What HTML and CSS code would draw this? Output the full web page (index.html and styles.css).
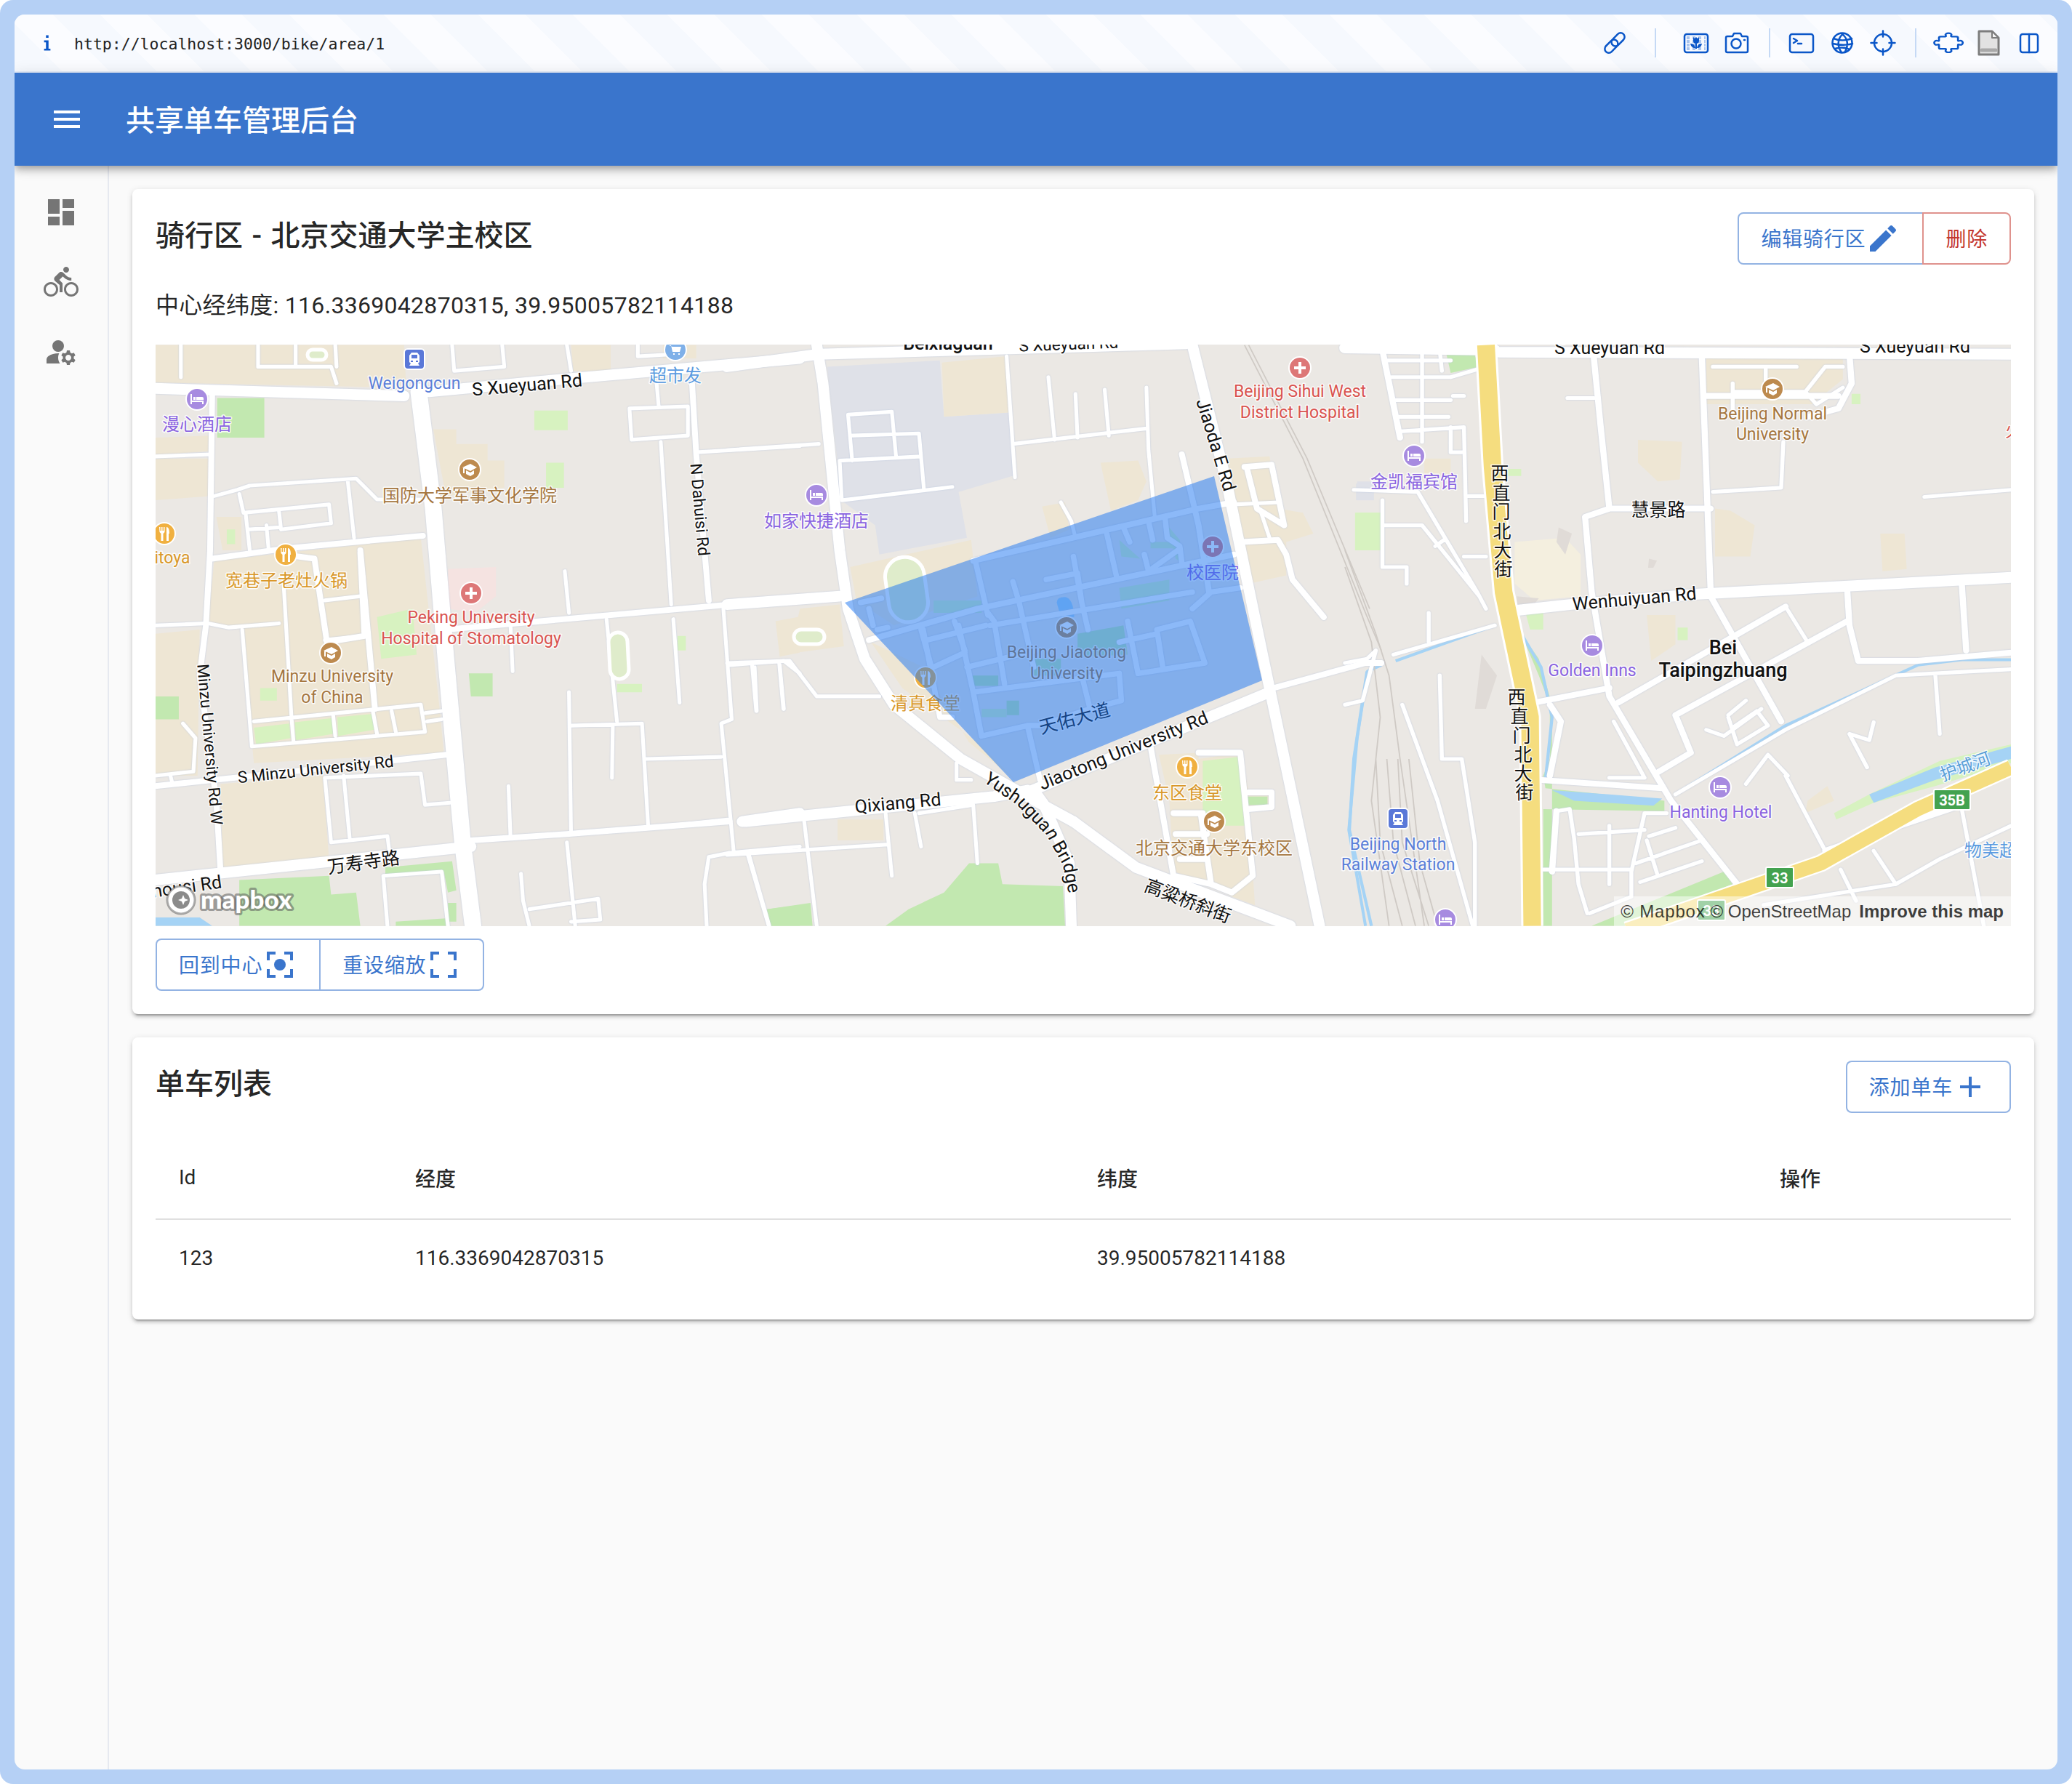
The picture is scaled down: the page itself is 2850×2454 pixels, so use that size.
FILE: index.html
```html
<!DOCTYPE html>
<html lang="zh">

<head>
    <meta charset="UTF-8">
    <title>共享单车管理后台</title>
    <link rel="stylesheet" href="styles.css">
</head>

<body>
    <div class="frame">
        <div class="window">
            <div class="browser-bar">
                <svg class="info-icon" viewBox="0 0 16 28"><path d="M6 2h4v4H6zM3 10h7v13h3v3H3v-3h3V13H3z"/></svg>
                <span class="url">http://localhost:3000/bike/area/1</span>
                <div class="tools">
                    <svg class="tool" viewBox="0 0 36 36"><g transform="rotate(-45 18 18)"><rect x="1" y="12.500" width="21" height="11" rx="5.500"/><rect x="14" y="12.500" width="21" height="11" rx="5.500"/></g></svg>
                    <span class="sep sep-wide"></span>
                    <svg class="tool" viewBox="0 0 36 36"><path class="tool-dots" d="M5 11h26M5 16h26M5 21h26M5 26h26"/><rect x="2" y="6" width="32" height="25" rx="3"/><path class="tool-fill" d="M14 10l2 2 2-2 2 2 2-2v5a4 4 0 0 1-8 0zM17 18h2v8h-2zM10 19c4 0 6 2 7 6-4 0-6-2-7-6zM26 19c-4 0-6 2-7 6 4 0 6-2 7-6z"/></svg>
                    <svg class="tool" viewBox="0 0 36 36"><path d="M5 9h7l2-4h9l2 4h6a2 2 0 0 1 2 2v18a2 2 0 0 1-2 2H5a2 2 0 0 1-2-2V11a2 2 0 0 1 2-2z"/><circle cx="17" cy="19" r="6.500"/><path d="M28 14h1"/></svg>
                    <span class="sep"></span>
                    <svg class="tool" viewBox="0 0 36 36"><rect x="2" y="6" width="32" height="25" rx="3"/><path d="M7 12l5 3-5 3M13 19h5"/></svg>
                    <svg class="tool" viewBox="0 0 36 36"><circle cx="18" cy="18" r="13.500"/><path d="M20 5c-8 5-10 17-3 26M16 5c8 4 12 14 6 25M6 12c7 3 17 3 25 0M5 19c8 2 17 3 27 0M8 26c7-2 14-2 20 1"/></svg>
                    <svg class="tool" viewBox="0 0 36 36"><circle cx="18" cy="18" r="12"/><path d="M18 1.500v8M18 26.500v8M1.500 18h8M26.500 18h8"/></svg>
                    <span class="sep"></span>
                    <svg class="tool" viewBox="0 0 36 36"><path transform="translate(-.5 1.500) scale(1.090 .880)" d="M8 9h6c1 0 1-1 .5-2-1-2 1-3.500 3.500-3.500s4.500 1.500 3.500 3.500c-.5 1-.5 2 .5 2h6a2 2 0 0 1 2 2v4c0 1 1 1 2 .5 2-1 4 .5 4 3s-2 4-4 3c-1-.5-2-.5-2 .5v4a2 2 0 0 1-2 2h-6c-1 0-1 1-.5 2 1 2-1 3.500-3.500 3.500s-4.500-1.500-3.500-3.500c.5-1 .5-2-.5-2H8a2 2 0 0 1-2-2v-4c0-1-1-1-2-.5-2 1-4-.5-4-3s2-4 4-3c1 .5 2 .5 2-.5v-4a2 2 0 0 1 2-2z"/></svg>
                    <svg class="tool tool-file" viewBox="0 0 36 36"><path d="M5 2h18l9 9v23H5z"/><path class="file-fold" d="M23 2v9h9z"/><path class="file-bar" d="M9 28h19"/></svg>
                    <svg class="tool" viewBox="0 0 36 36"><rect x="6" y="6" width="24" height="25" rx="3"/><path d="M18 6v25"/></svg>
                </div>
            </div>

            <header class="app-bar">
                <svg class="mui-icon" viewBox="0 0 24 24"><path d="M3 18h18v-2H3v2zm0-5h18v-2H3v2zm0-7v2h18V6H3z"/></svg>
                <h1 class="app-title">共享单车管理后台</h1>
            </header>

            <div class="app-body">
                <nav class="sidebar">
                    <svg class="mui-icon" viewBox="0 0 24 24"><path d="M3 13h8V3H3v10zm0 8h8v-6H3v6zm10 0h8V11h-8v10zm0-18v6h8V3h-8z"/></svg>
                    <svg class="mui-icon" viewBox="0 0 24 24"><path d="M15.5 5.5c1.1 0 2-.9 2-2s-.9-2-2-2-2 .9-2 2 .9 2 2 2zM5 12c-2.8 0-5 2.2-5 5s2.2 5 5 5 5-2.2 5-5-2.2-5-5-5zm0 8.5c-1.9 0-3.5-1.6-3.5-3.5s1.6-3.5 3.5-3.5 3.5 1.6 3.5 3.5-1.6 3.5-3.5 3.5zm5.8-10l2.4-2.4.8.8c1.3 1.3 3 2.1 5.1 2.1V9c-1.5 0-2.7-.6-3.6-1.5l-1.9-1.9c-.5-.4-1-.6-1.6-.6s-1.1.2-1.4.6L7.8 8.4c-.4.4-.6.9-.6 1.4 0 .6.2 1.1.6 1.4L11 14v5h2v-6.2l-2.2-2.3zM19 12c-2.8 0-5 2.2-5 5s2.2 5 5 5 5-2.2 5-5-2.2-5-5-5zm0 8.5c-1.9 0-3.5-1.6-3.5-3.5s1.6-3.5 3.5-3.5 3.5 1.6 3.5 3.5-1.6 3.5-3.5 3.5z"/></svg>
                    <svg class="mui-icon" viewBox="0 0 24 24"><circle cx="10" cy="8" r="4"/><path d="M10.67 13.02c-.22-.01-.44-.02-.67-.02-2.42 0-4.68.67-6.61 1.82-.88.52-1.39 1.5-1.39 2.53V20h9.26c-.79-1.13-1.26-2.51-1.26-4 0-1.07.25-2.07.67-2.98zM20.75 16c0-.22-.03-.42-.06-.63l1.14-1.01-1-1.73-1.45.49c-.32-.27-.68-.48-1.08-.63L18 11h-2l-.3 1.49c-.4.15-.76.36-1.08.63l-1.45-.49-1 1.73 1.14 1.01c-.03.21-.06.41-.06.63s.03.42.06.63l-1.14 1.01 1 1.73 1.45-.49c.32.27.68.48 1.08.63L16 21h2l.3-1.49c.4-.15.76-.36 1.08-.63l1.45.49 1-1.73-1.14-1.01c.03-.21.06-.41.06-.63zM17 18c-1.1 0-2-.9-2-2s.9-2 2-2 2 .9 2 2-.9 2-2 2z"/></svg>
                </nav>

                <main class="content">
                    <section class="card">
                        <div class="card-head">
                            <h2 class="card-title">骑行区 - 北京交通大学主校区</h2>
                            <div class="btn-group">
                                <button class="btn">编辑骑行区<svg class="mui-icon" viewBox="0 0 24 24"><path d="M3 17.25V21h3.75L17.81 9.94l-3.75-3.75L3 17.25zM20.71 7.04c.39-.39.39-1.02 0-1.41l-2.34-2.34c-.39-.39-1.02-.39-1.41 0l-1.83 1.83 3.75 3.75 1.83-1.83z"/></svg></button>
                                <button class="btn btn-danger">删除</button>
                            </div>
                        </div>
                        <p class="center-info">中心经纬度: 116.3369042870315, 39.95005782114188</p>

                        <div class="map">
                            <svg class="map-svg" viewBox="214 474 2552 800">
                                <defs>
                                    <g id="i-hotel"><circle class="pin pin-hotel" r="15"/><path class="glyph" d="M-9 7V-7h2V2h16v5H7V4H-7v3zM-5-3h3v4h-3zM-1-3h8a2 2 0 0 1 2 2v2H-1z"/></g>
                                    <g id="i-edu"><circle class="pin pin-edu" r="15"/><path class="glyph" d="M-10-3 1-8 10-3 1 2zM-5 1l6 3 5-3v5l-5 3-6-3zM-9-2h2v7h-2z"/></g>
                                    <g id="i-food"><circle class="pin pin-food" r="15"/><path class="glyph" d="M-7-9h1.500v5H-4v-5h1.500v5H-1v-5H.5v7l-2 2V10h-3V0l-2-2zM3-9c3 0 4 4 4 9H6v10H3z"/></g>
                                    <g id="i-hosp"><circle class="pin pin-hosp" r="15"/><path class="glyph" d="M-2-8h4v6h6v4H2v6h-4V2h-6v-4h6z"/></g>
                                    <g id="i-metro"><rect class="pin pin-metro" x="-14" y="-14" width="28" height="28" rx="5"/><path class="glyph" d="M-4-9h8l3 4v9l-2 2 2 3H-7l2-3-2-2V-5zM-4-6v5h8v-5zM-5 2v2h3V2zM2 2v2h3V2z"/></g>
                                    <g id="i-market"><circle class="pin pin-market" r="15"/><path class="glyph" d="M-9-6h3l2 9H6l2-7H-4M-3 5h2v2h-2zM4 5h2v2H4z"/></g>
                                </defs>

                                <rect class="map-bg" x="214" y="474" width="2552" height="800"/>

                                <!-- land use, drawn from left to right -->
                                <g transform="translate(200 470) scale(.574)">
                                    <path class="tan" d="M24 8H620L625 110 24 98zM24 230 155 225V262L24 272zM24 280H155V370L24 380zM165 525 660 470 705 880 715 985 260 1010 230 690 150 670zM180 1060 425 1040 440 1240 185 1265zM24 700 130 690 125 1040 24 1040zM690 210H745V245H820V285H860V350L720 370zM170 420H230V500H185zM1020 8H1115V70H1025zM1510 670 1568 660V745L1520 755zM1240 8H1320V40H1240z"/>
                                    <path class="pink" d="M725 545 840 540V610L790 650 725 640z"/>
                                    <path class="green" d="M172 135H285V230H172zM775 795H832V850H780zM24 850H80V905H24zM225 1290 440 1280 445 1325 505 1320 515 1400H225zM1490 1360 1568 1350V1400H1500zM575 1260 735 1245 745 1315 725 1320 715 1270 575 1280zM725 1345H745V1390H725zM600 1390 720 1382 722 1400H600z"/>
                                    <path class="green-light" d="M932 165H1012V212H932zM960 290H1003V350H960zM555 660 640 640 650 750 565 760zM260 925 345 915 348 950 265 965zM358 912 448 902 450 940 360 955zM460 900 545 892 548 930 462 945zM1130 820H1190V840H1130zM275 830H315V860H275zM195 450H215V485H195zM1275 705H1295V740H1275z"/>
                                    <path class="water" d="M24 1380H130L160 1400H24z"/>
                                </g>
                                <g transform="translate(1000 470) scale(.574)">
                                    <path class="slate" d="M240 60 510 45 520 180 675 170 690 320 555 360 575 470 365 510 355 440 280 385 265 290z"/>
                                    <path class="slate" d="M1510 335H1550V380H1510z"/>
                                    <path class="tan" d="M515 50 670 35 675 170 520 180zM295 540 585 475 600 610 480 650 400 680 310 620zM345 720 470 780 580 960 690 1050 600 960 420 830zM120 670 170 660 175 640 270 630 280 730 130 750zM895 290 985 285 1005 335 985 380 920 405zM755 395 810 385 820 450 775 470zM1200 280 1300 275 1320 400 1380 410 1405 460 1340 480 1340 560 1250 580 1220 400zM1035 990 1130 985V1000L1230 985 1250 1075H1310V1115L1250 1120 1265 1350 1210 1330 1160 1300 1070 1270 1060 1100zM265 1145H375V1195H265z"/>
                                    <path class="green" d="M435 1360 520 1320 580 1250H650L660 1300 805 1305 810 1400H380zM95 1360 200 1345 205 1400H105zM1245 1090H1295V1110H1245zM840 700 950 680 960 750 840 755zM730 760H800V800H730zM670 860H700V895H670zM585 800H650V825H585z"/>
                                    <path class="green-light" d="M1140 1005 1225 995 1240 1160H1170L1140 1130zM1505 410H1568V500H1505zM170 695H225V720H170zM940 590 1060 570 1060 620 945 640zM495 620H610V650H495zM610 880H670V900H610zM940 475 990 520 945 515zM1055 440 1085 475 1090 530 1075 520zM1015 480 1070 480 1070 495 1015 495z"/>
                                    <path class="water" d="M790 625Q790 612 810 612 830 615 832 660H800z"/>
                                </g>
                                <g transform="translate(1850 470) scale(.606 .574)">
                                    <path class="tan" d="M820 40H1130V90L1060 150H820zM665 235 765 240 760 330 710 335 665 290zM840 400 875 405 930 440 920 515H840zM1215 460H1270L1275 545 1220 550zM685 655H750V725L695 765zM1050 1100 1095 1065 1110 1100 1045 1130zM180 280H240V320H180z"/>
                                    <path class="cream" d="M385 480 500 470 535 510V610L430 620 385 580z"/>
                                    <path class="grey" d="M485 445 515 460 500 510 480 480zM310 750 345 800 320 880H295zM690 520 708 525 700 542H688zM390 610 440 615 425 635H390z"/>
                                    <path class="green" d="M228 20H290L305 60 240 75zM400 700 440 800 465 870 465 1000 450 1040 455 1070 725 1100 725 1125 450 1120 450 1400H470L470 1030 470 870 440 760zM560 1400 860 1270 880 1300 640 1400z"/>
                                    <path class="green-light" d="M25 410H80V500H25zM755 685H778V715H755zM1150 125H1170V150H1150zM1110 1130 1190 1085 1350 1005 1512 965V1010L1340 1065 1200 1105 1115 1145zM370 305H400V322H370zM410 650H450V690H420z"/>
                                    <path class="slate" d="M25 340H65V380H25z"/>
                                    <path class="water" d="M1190 1085 1340 1020 1512 970V1000L1340 1050 1200 1105zM470 1075 600 1085 720 1095 700 1112 520 1100z"/>
                                </g>

                                <!-- rails and streams sit under the streets -->
                                <g transform="translate(1000 470) scale(.574)">
                                    <path class="rail" d="M1240 8 1380 280 1530 650 1568 740M1250 8 1390 280 1540 640"/>
                                    <path class="stream" d="M1568 775 1535 790 1510 950 1490 1170 1530 1400"/>
                                </g>
                                <g transform="translate(1850 470) scale(.606 .574)">
                                    <path class="rail" d="M0 500 70 700 100 800 125 1000 180 1400M0 540 60 720 80 900 60 1100 100 1400M70 1000 80 1200 130 1400M95 1000 110 1200 160 1400M120 1000 130 1200 190 1400M145 1000 170 1250 210 1400"/>
                                    <path class="stream" d="M115 765 340 680M50 790 20 1000 10 1170 60 1400M400 700 445 780 470 900 455 1050M750 1085 1000 920 1300 775 1400 762H1512"/>
                                </g>

                                <g class="roads">
                                    <g transform="translate(200 470) scale(.574)">
                                        <path class="w1" d="M85 8V85M270 8V60H445L458 100M360 8V60M455 8 458 60M735 8 740 70 860 60 855 8M1010 8 1020 70M1180 8V35L1270 30M1225 100 1230 155M1160 160 1300 155V225L1165 235ZM1235 240 1260 630M1320 265 1568 250M24 275 155 270M165 370 220 355 250 345 505 328 555 378H660M225 365 235 410 440 390 445 435 325 450 320 405M240 410 250 500M290 440 295 495M245 450 320 445M485 335 500 470M430 620 515 610M430 715 525 705M330 560 350 900M24 680 150 675 200 685 320 675M232 690 255 970 670 935 660 870 260 910M350 900 355 960M450 895 455 945M545 885 555 940M590 885 600 935M670 890 710 885M675 910 710 905M430 1045 445 1200 490 1195 475 1040M430 1045 660 1035 670 1110 730 1105M490 1195 580 1185 585 1225M570 1280 580 1400M570 1280 710 1270 725 1400M1005 550 1015 650M1105 665 1130 910M1015 840 1020 1180M1020 920 1190 915 1205 1165M1120 920 1118 1045M1200 1000 1380 995M1385 640 1405 905 1380 915 1410 1225M1210 1165 1395 1145M1400 775 1530 765 1568 795M1460 780 1465 885M1520 775 1530 880M1265 665 1280 865M875 680 880 790M870 1065 875 1190M1010 1200 1030 1400M900 1275 905 1340 920 1400M920 1360 1085 1335 1090 1385 1020 1390M1350 1235 1400 1225 1568 1210M1350 1235 1340 1300 1345 1400M1445 1225 1495 1400M90 915 120 950 115 1030 24 1040M60 1040 65 1060"/>
                                        <path class="w2" d="M1310 100 1320 270 1350 620M160 125 155 500 145 680 130 800 170 1100 180 1270M160 520 340 495 665 465M330 510 405 520 435 720 525 705 515 505M515 500 550 880M24 1065 260 1040 720 990M780 1195 1010 1180 1400 1150M720 690 1568 615"/>
                                        <path class="w3" d="M24 112 620 130M24 1290 780 1210M1430 1150 1568 1130"/>
                                        <path class="w3" d="M680 120 1000 90 1568 40"/>
                                        <path class="w4" d="M655 120 690 400 720 760 760 1200 785 1400"/>
                                    </g>
                                    <g transform="translate(1000 470) scale(.574)">
                                        <path class="w1" d="M0 260 220 245M270 285 465 275M290 175 395 168 405 275M290 175 300 285M300 225 460 220 472 355M270 285 275 380 540 348M670 35 690 325M685 245 1005 208M770 85 785 235M835 125 840 230M905 115 915 225M1005 110 1010 260 1025 420M800 385 825 430 835 470M1215 390 1320 385M1280 410 1300 470M0 770 150 765 215 850H365M60 775 70 885M125 770 135 880M185 1150 215 1400M380 1130 395 1280M0 1230 385 1205M50 1230 100 1400M450 1130 465 1210M460 1130 590 1110 600 1250M550 1010V1050H585"/>
                                        <path class="w1c" d="M595 525 625 655M685 575 700 625M465 690 490 780M545 670 570 740M625 650 640 670M700 625 735 780M765 570 840 555 850 625 865 690M830 515 850 625M910 460 935 570M950 445 965 480M1000 510 1010 550 1080 500M1010 430 1020 475M1050 425 1055 470 1085 490 1090 530M960 670 985 795M1030 690 1110 670 1145 770 1045 785ZM940 720 1030 700M985 795 1145 770M480 715 620 680M470 690 510 900 540 900M495 780 570 745M575 780 740 740M590 840 940 795 945 860 870 880M590 840 610 945 720 920M720 920 750 1050M850 800 870 880 750 920 720 920M630 680 1115 600M1115 640 1160 600 1230 590M555 680 590 840M640 670 665 820M320 625 370 615M340 640 350 680M360 690 385 685"/>
                                        <path class="w2" d="M1090 270 1130 440 1155 600M1240 300 1305 295 1335 440 1270 400 1245 300M1235 480 1320 475 1340 510 1355 570 1430 660M590 525 1130 400 1215 385M340 715 600 640 1215 510M1015 970 1070 1280 1160 1300M1130 985 1230 985 1260 1280 1210 1320 1160 1300 1135 1130M1310 830 1530 770 1568 770M1250 1080H1305V1115L1250 1120M1070 1130H1140M1075 1180H1150M1085 1240H1150"/>
                                        <path class="w3" d="M0 60 220 30 1100 5M0 630 270 610M45 1150 640 1090 720 1075M735 1075 760 1110 820 1250 825 1400M720 1080 1300 840M830 1150 980 1260 1350 1400"/>
                                        <path class="w3" d="M1115 8 1200 350 1300 830 1420 1400M215 8 230 100 270 500 290 640 330 760 400 870 560 1000 720 1090 830 1150"/>
                                    </g>
                                    <g transform="translate(1850 470) scale(.606 .574)">
                                        <path class="w1" d="M95 45H240M105 85H240M115 140H240M120 180H235M125 215 270 205 275 430M175 20V240M215 20 220 70M240 205V265H270M240 85 305 65M245 130H270M20 355 165 360 300 600 320 640M280 370H320M90 440H175L305 610M225 475 205 490M85 380V540H140V580M270 515H320M505 135H565M835 60H1025M955 60V120M880 100V170M885 120H1045L1090 60H1130M1045 120 1070 150 1130 110M835 360 990 350 995 240M1315 372 1512 355M1000 635 1050 720M530 1180 680 1170M680 1130 650 1270V1330L555 1370M680 1130H730M690 1185 750 1165M660 1250 810 1195M670 1295 810 1245M685 1195 710 1280M600 1160V1300M1000 1040 1090 1220M960 990 1005 1040M960 990 910 1060M870 895 910 860M890 965 960 920M870 900 890 965M880 925 935 885 960 920M1145 940 1185 1020M1200 912 1190 955 1145 940M1340 800 1350 940M600 1045H680L610 910M130 870 210 1100 290 1400M215 800 220 1000 265 1000 295 1200V1400M1400 1120 1450 1400M1125 1265 1160 1340M1200 1220 1250 1300M950 1350 1250 1300 1350 1240 1512 1160M820 930 860 945 945 880M480 1125 510 1120 520 1190 530 1300 550 1370M440 1265H650M190 650V720M110 750 340 680M0 770 50 760 70 740 40 860 0 870M750 1085 1000 930 1250 800 1512 785"/>
                                        <path class="w2" d="M85 20 125 230M565 40 580 200 600 400 545 420 560 600 600 850 740 1100 890 1300M545 420 600 400H830M810 35 830 600M820 130H1120M1145 30 1150 100 1120 160 1050 180M830 610 990 910M1000 635 620 865M1140 670 750 895 785 985 705 1035M1140 595 1145 680 1165 765H1300L1512 745M1400 580 1410 740M430 865 600 830M440 1050 720 1070M480 1125 470 1270M465 870 490 910 465 1040M1090 1220 1400 1110"/>
                                        <path class="w3" d="M0 15 340 20M350 25 1512 30M380 645 510 630 800 605 1512 565"/>
                                    </g>
                                </g>

                                <g transform="translate(1850 470) scale(.606 .574)">
                                    <path class="hw-case hw-tall" d="M320 8 335 300 360 600 420 900 425 1400"/>
                                    <path class="hw-case" d="M640 1410 1080 1250 1300 1120 1512 1020"/>
                                    <path class="hw hw-tall" d="M320 8 335 300 360 600 420 900 425 1400"/>
                                    <path class="hw" d="M640 1410 1080 1250 1300 1120 1512 1020"/>
                                </g>

                                <!-- track fields -->
                                <rect class="track" x="838" y="870" width="26" height="64" rx="13" transform="rotate(-3 851 902)"/>
                                <rect class="track" x="423" y="481" width="26" height="14" rx="7"/>
                                <rect class="track" x="1220" y="766" width="54" height="90" rx="27" transform="rotate(-8 1247 811)"/>
                                <rect class="track" x="1092" y="866" width="42" height="20" rx="10"/>

                                <use href="#i-metro" x="570" y="494"/>
                                <use href="#i-market" x="929" y="481"/>
                                <use href="#i-hotel" x="271" y="549"/>
                                <use href="#i-edu" x="646" y="646"/>
                                <use href="#i-food" x="226" y="734"/>
                                <use href="#i-food" x="393" y="763"/>
                                <use href="#i-hosp" x="648" y="816"/>
                                <use href="#i-edu" x="455" y="898"/>
                                <use href="#i-hosp" x="1788" y="506"/>
                                <use href="#i-hotel" x="1123" y="681"/>
                                <use href="#i-hosp" x="1668" y="752"/>
                                <use href="#i-edu" x="1467" y="863"/>
                                <use href="#i-food" x="1273" y="932"/>
                                <use href="#i-food" x="1633" y="1055"/>
                                <use href="#i-edu" x="1670" y="1130"/>
                                <use href="#i-hotel" x="1945" y="627"/>
                                <use href="#i-edu" x="2438" y="535"/>
                                <use href="#i-hotel" x="2190" y="888"/>
                                <use href="#i-hotel" x="2366" y="1083"/>
                                <use href="#i-metro" x="1923" y="1126"/>
                                <use href="#i-hotel" x="1988" y="1265"/>

                                <g class="labels">
                                    <text class="c-blue" x="570" y="535">Weigongcun</text>
                                    <text class="c-road" x="725" y="538" transform="rotate(-5 725 529)">S Xueyuan Rd</text>
                                    <text class="c-sky c-zh" x="929" y="525">超市发</text>
                                    <text class="c-purple c-zh" x="271" y="592">漫心酒店</text>
                                    <text class="c-brown c-zh" x="646" y="690">国防大学军事文化学院</text>
                                    <text class="c-road c-small" x="963" y="709" transform="rotate(85 963 701)">N Dahuisi Rd</text>
                                    <text class="c-orange" x="237" y="775">itoya</text>
                                    <text class="c-orange c-zh" x="394" y="807">宽巷子老灶火锅</text>
                                    <text class="c-red" x="648" y="857">Peking University</text>
                                    <text class="c-red" x="648" y="886">Hospital of Stomatology</text>
                                    <text class="c-brown" x="457" y="938">Minzu University</text>
                                    <text class="c-brown" x="457" y="967">of China</text>
                                    <text class="c-road c-small" x="289" y="1032" transform="rotate(85 289 1024)">Minzu University Rd W</text>
                                    <text class="c-road c-small" x="434" y="1066" transform="rotate(-6 434 1057)">S Minzu University Rd</text>
                                    <text class="c-road" x="500" y="1195" transform="rotate(-8 500 1186)">万寿寺路</text>
                                    <text class="c-road" x="257" y="1228" transform="rotate(-8 257 1219)">nousi Rd</text>

                                    <text class="c-road c-bold" x="1304" y="481">Beixiaguan</text>
                                    <text class="c-road c-small" x="1470" y="481" transform="rotate(-2 1470 476)">S Xueyuan Rd</text>
                                    <text class="c-red" x="1788" y="546">Beijing Sihui West</text>
                                    <text class="c-red" x="1788" y="575">District Hospital</text>
                                    <text class="c-road" x="1672" y="620" transform="rotate(73 1672 612)">Jiaoda E Rd</text>
                                    <text class="c-purple c-zh" x="1123" y="725">如家快捷酒店</text>
                                    <text class="c-purple c-zh" x="1668" y="796">校医院</text>
                                    <text class="c-brown" x="1467" y="905">Beijing Jiaotong</text>
                                    <text class="c-brown" x="1467" y="934">University</text>
                                    <text class="c-orange c-zh" x="1273" y="976">清真食堂</text>
                                    <text class="c-road" x="1478" y="997" transform="rotate(-15 1478 988)">天佑大道</text>
                                    <text class="c-road" x="1545" y="1041" transform="rotate(-22 1545 1032)">Jiaotong University Rd</text>
                                    <text class="c-road" x="1235" y="1113" transform="rotate(-5 1235 1104)">Qixiang Rd</text>
                                    <path id="bridge-curve" class="no-paint" d="M1352 1075 1400 1108 1440 1150 1462 1190 1472 1240"/>
                                    <text class="c-road c-start"><textPath href="#bridge-curve">Yushuguan Bridge</textPath></text>
                                    <text class="c-orange c-zh" x="1633" y="1099">东区食堂</text>
                                    <text class="c-brown c-zh" x="1670" y="1175">北京交通大学东校区</text>
                                    <text class="c-road" x="1634" y="1248" transform="rotate(21 1634 1239)">高粱桥斜街</text>

                                    <text class="c-road" x="2214" y="487">S Xueyuan Rd</text>
                                    <text class="c-road" x="2634" y="485">S Xueyuan Rd</text>
                                    <text class="c-purple c-zh" x="1945" y="671">金凯福宾馆</text>
                                    <text class="c-brown" x="2438" y="577">Beijing Normal</text>
                                    <text class="c-brown" x="2438" y="605">University</text>
                                    <text class="c-red c-zh" x="2770" y="601">火</text>
                                    <text class="c-road" x="2281" y="710">慧景路</text>
                                    <text class="c-road" x="2063" y="660">西</text>
                                    <text class="c-road" x="2065" y="687">直</text>
                                    <text class="c-road" x="2065" y="713">门</text>
                                    <text class="c-road" x="2066" y="740">北</text>
                                    <text class="c-road" x="2067" y="766">大</text>
                                    <text class="c-road" x="2068" y="792">街</text>
                                    <text class="c-road" x="2086" y="968">西</text>
                                    <text class="c-road" x="2090" y="994">直</text>
                                    <text class="c-road" x="2093" y="1021">门</text>
                                    <text class="c-road" x="2095" y="1047">北</text>
                                    <text class="c-road" x="2095" y="1073">大</text>
                                    <text class="c-road" x="2097" y="1099">街</text>
                                    <text class="c-road" x="2248" y="832" transform="rotate(-5 2248 823)">Wenhuiyuan Rd</text>
                                    <text class="c-purple" x="2190" y="930">Golden Inns</text>
                                    <text class="c-road c-place" x="2370" y="900">Bei</text>
                                    <text class="c-road c-place" x="2370" y="931">Taipingzhuang</text>
                                    <text class="c-purple" x="2367" y="1125">Hanting Hotel</text>
                                    <text class="c-blue" x="1923" y="1169">Beijing North</text>
                                    <text class="c-blue" x="1923" y="1197">Railway Station</text>
                                    <text class="c-river c-zh" x="2703" y="1063" transform="rotate(-20 2703 1054)">护城河</text>
                                    <text class="c-sky c-zh" x="2738" y="1178">物美超</text>
                                </g>

                                <g class="shields">
                                    <rect x="2660" y="1086" width="50" height="28" rx="2"/>
                                    <text x="2685" y="1108">35B</text>
                                    <rect x="2429" y="1193" width="38" height="28" rx="2"/>
                                    <text x="2448" y="1215">33</text>
                                    <rect x="2335" y="1238" width="38" height="28" rx="2"/>
                                    <text x="2354" y="1260">33</text>
                                </g>

                                <polygon class="area" points="1162,829 1670,655 1736,936 1394,1076"/>

                                <circle class="logo-ring" cx="249" cy="1238" r="19"/>
                                <circle class="logo-core" cx="249" cy="1238" r="12"/>
                                <path class="glyph" d="M252 1231l2 5 5 2-5 2-2 5-2-5-5-2 5-2z"/>
                                <text class="logo-text" x="276" y="1250">mapbox</text>
                            </svg>
                            <div class="attribution">
                                <span class="attr-first">© Mapbox</span>
                                <span>© OpenStreetMap</span>
                                <b>Improve this map</b>
                            </div>
                        </div>

                        <div class="btn-group map-actions">
                            <button class="btn">回到中心<svg class="mui-icon" viewBox="0 0 24 24"><path d="M3 15h2v4h4v2H3zM3 3h6v2H5v4H3zM15 3h6v6h-2V5h-4zM19 15h2v6h-6v-2h4z"/><circle cx="12" cy="12" r="4"/></svg></button>
                            <button class="btn">重设缩放<svg class="mui-icon" viewBox="0 0 24 24"><path d="M3 15h2v4h4v2H3zM3 3h6v2H5v4H3zM15 3h6v6h-2V5h-4zM19 15h2v6h-6v-2h4z"/></svg></button>
                        </div>
                    </section>

                    <section class="card">
                        <div class="card-head card-head-list">
                            <h2 class="card-title">单车列表</h2>
                            <button class="btn">添加单车<svg class="mui-icon" viewBox="0 0 24 24"><path d="M19 13h-6v6h-2v-6H5v-2h6V5h2v6h6v2z"/></svg></button>
                        </div>
                        <table class="bike-table">
                            <thead>
                                <tr>
                                    <th class="col-id">Id</th>
                                    <th class="col-lng">经度</th>
                                    <th class="col-lat">纬度</th>
                                    <th>操作</th>
                                </tr>
                            </thead>
                            <tbody>
                                <tr>
                                    <td>123</td>
                                    <td>116.3369042870315</td>
                                    <td>39.95005782114188</td>
                                    <td></td>
                                </tr>
                            </tbody>
                        </table>
                    </section>
                </main>
            </div>
        </div>
    </div>
</body>

</html>
```

FILE: styles.css
```css
* {
    box-sizing: border-box;
}

html,
body {
    margin: 0;
    height: 100%;
    background-color: #fff;
    font-family: Roboto, "Noto Sans CJK SC", sans-serif;
    color: rgba(0, 0, 0, 0.87);
}

.frame {
    height: 2454px;
    padding: 20px;
    background-color: #b5d0f5;
    border-radius: 18px;
}

.window {
    display: flex;
    flex-direction: column;
    height: 2414px;
    background-color: #fafafa;
    border-radius: 14px;
    overflow: hidden;
}

/* browser toolbar */
.browser-bar {
    display: flex;
    align-items: center;
    height: 80px;
    padding: 0 11px 0 38px;
    background: repeating-linear-gradient(45deg, #f6f9fe 0 46px, #fbfcff 46px 92px);
    border-bottom: 2px solid #e6eefb;
}

.info-icon {
    width: 14px;
    height: 26px;
    margin-right: 30px;
    fill: #0a56c8;
}

.url {
    padding-top: 2px;
    font-family: "DejaVu Sans Mono", monospace;
    font-size: 21.5px;
    color: #222;
}

.tools {
    display: flex;
    align-items: center;
    margin-left: auto;
}

.tool {
    width: 36px;
    height: 36px;
    margin: 0 10px;
    overflow: visible;
    fill: none;
    stroke: #0a56c8;
    stroke-width: 2.5;
    stroke-linejoin: round;
    stroke-linecap: round;
}

.tool-fill {
    fill: #0a56c8;
    stroke: none;
}

.tool-dots {
    stroke: #a9c4ee;
    stroke-width: 4;
    stroke-linecap: butt;
    stroke-dasharray: 4 4;
}

.tool-file {
    fill: #e2e2e2;
    stroke: #7d7d7d;
    stroke-width: 3;
}

.file-fold {
    fill: #f4f4f4;
    stroke-width: 2;
}

.file-bar {
    stroke: #a9a9a9;
    stroke-width: 5;
}

.sep {
    width: 2px;
    height: 40px;
    margin: 0 15.5px;
    background-color: #c5d9f5;
}

.sep-wide {
    margin: 0 27px;
}

/* app bar */
.app-bar {
    position: relative;
    z-index: 2;
    display: flex;
    align-items: center;
    flex-shrink: 0;
    height: 128px;
    padding-left: 48px;
    background-color: #3a75cc;
    box-shadow: 0 4px 8px -2px rgba(0, 0, 0, 0.2), 0 8px 10px rgba(0, 0, 0, 0.14), 0 2px 20px rgba(0, 0, 0, 0.12);
    color: #fff;
}

.mui-icon {
    flex-shrink: 0;
    width: 48px;
    height: 48px;
    fill: currentColor;
}

.app-title {
    margin: 0 0 2px 57px;
    font-size: 40px;
    font-weight: 500;
}

.app-body {
    display: flex;
    flex: 1;
    min-height: 0;
}

/* sidebar */
.sidebar {
    display: flex;
    flex-direction: column;
    align-items: center;
    gap: 48px;
    width: 130px;
    padding: 40px 0 0 0;
    border-right: 2px solid #e6e9f0;
    color: #757575;
}

/* content */
.content {
    flex: 1;
    padding: 32px;
}

.card {
    margin-bottom: 32px;
    padding: 32px;
    background-color: #fff;
    border-radius: 8px;
    box-shadow: 0 6px 2px -4px rgba(0, 0, 0, 0.2), 0 4px 4px rgba(0, 0, 0, 0.14), 0 2px 10px rgba(0, 0, 0, 0.12);
}

.card-head {
    display: flex;
    justify-content: space-between;
    align-items: flex-start;
    height: 72px;
}

.card-head-list {
    margin-bottom: 40px;
}

.card-title {
    margin: 0;
    font-size: 40px;
    font-weight: 500;
    line-height: 66px;
    word-spacing: 2.5px;
}

.center-info {
    margin: 32px 0 30px;
    font-size: 32px;
    line-height: 48px;
    letter-spacing: 0.3px;
}

/* buttons */
.btn-group {
    display: flex;
}

.btn {
    display: inline-flex;
    align-items: center;
    height: 72px;
    padding: 0 30px 2px;
    background-color: #fff;
    border: 2px solid rgba(58, 117, 204, 0.55);
    border-radius: 8px;
    color: #3a75cc;
    font-family: Roboto, "Noto Sans CJK SC", sans-serif;
    font-size: 28px;
    letter-spacing: 0.8px;
}

.btn .mui-icon {
    margin-bottom: -2px;
}

.btn-group .btn:not(:last-child) {
    border-top-right-radius: 0;
    border-bottom-right-radius: 0;
}

.btn-group .btn + .btn {
    margin-left: -2px;
    border-top-left-radius: 0;
    border-bottom-left-radius: 0;
}

.btn-danger {
    border-color: rgba(196, 56, 47, 0.55);
    color: #c4382f;
}

.map-actions {
    margin-top: 17px;
}

/* map */
.map {
    position: relative;
    height: 800px;
    overflow: hidden;
}

.map-svg {
    display: block;
    width: 100%;
    height: 100%;
}

.map-bg {
    fill: #ebe8e4;
}

.tan { fill: #eee6d4; }
.pink { fill: #f5e3e1; }
.green { fill: #c2e8b0; }
.green-light { fill: #d7f2c0; }
.water { fill: #a5d3f5; }
.slate { fill: #dfe1e8; }
.cream { fill: #f4efdf; }
.grey { fill: #e0dbd7; }

.rail {
    fill: none;
    stroke: #cfcac5;
    stroke-width: 3;
}

.stream {
    fill: none;
    stroke: #a5d3f5;
    stroke-width: 7;
}

.roads {
    filter: drop-shadow(0 0 1px #c3cde0);
}

.roads path {
    fill: none;
    stroke: #fff;
    stroke-linecap: round;
    stroke-linejoin: round;
}

.roads .w1 { stroke-width: 9; }
.roads .w1c { stroke-width: 13; }
.roads .w2 { stroke-width: 14; }
.roads .w3 { stroke-width: 26; }
.roads .w4 { stroke-width: 40; }

.hw,
.hw-case {
    fill: none;
    stroke-linejoin: round;
}

.hw {
    stroke: #f5dd7f;
    stroke-width: 34;
}

.hw-case {
    stroke: #fff;
    stroke-width: 42;
}

.hw.hw-tall {
    stroke-width: 40;
}

.hw-case.hw-tall {
    stroke-width: 50;
}

.track {
    fill: #dfeccb;
    stroke: #fff;
    stroke-width: 5;
}

.pin {
    stroke: #fff;
    stroke-width: 2;
}

.pin-hotel { fill: #a78be0; }
.pin-edu { fill: #bd8a4e; }
.pin-food { fill: #f0b040; }
.pin-hosp { fill: #dd7777; }
.pin-metro { fill: #5a78d8; }
.pin-market { fill: #7fb0e8; }

.glyph {
    fill: #fff;
}

.labels text {
    font-family: Roboto, "Noto Sans CJK SC", sans-serif;
    font-size: 23px;
    text-anchor: middle;
    paint-order: stroke;
    stroke: rgba(255, 255, 255, 0.85);
    stroke-width: 3px;
    stroke-linejoin: round;
}

.labels .c-zh { font-size: 24px; }
.labels .c-road { fill: #111; font-size: 25px; }
.labels .c-small { font-size: 22.5px; }
.labels .c-bold { font-weight: 500; }
.labels .c-place { font-size: 27px; font-weight: 500; }
.labels .c-start { text-anchor: start; }
.c-blue { fill: #5b7fd8; }
.c-sky { fill: #5b9be0; }
.c-purple { fill: #8a64e0; }
.c-brown { fill: #a5763f; }
.c-red { fill: #d9534f; }
.c-orange { fill: #d9982b; }
.c-river { fill: #5a9fd8; }

.no-paint {
    fill: none;
}

.shields rect {
    fill: #43a24f;
    stroke: #fff;
    stroke-width: 2;
}

.shields text {
    font-family: Roboto, sans-serif;
    font-size: 20px;
    font-weight: 700;
    fill: #fff;
    text-anchor: middle;
}

.area {
    fill: #1974f2;
    fill-opacity: 0.5;
}

.logo-ring {
    fill: #fff;
    stroke: rgba(90, 90, 90, 0.5);
    stroke-width: 3;
}

.logo-core {
    fill: #8b8b8b;
}

.logo-text {
    font-family: Lato, Roboto, sans-serif;
    font-size: 35px;
    font-weight: 900;
    fill: #fff;
    paint-order: stroke;
    stroke: rgba(90, 90, 90, 0.55);
    stroke-width: 6px;
    stroke-linejoin: round;
}

.attribution {
    position: absolute;
    right: 0;
    bottom: 0;
    display: flex;
    gap: 7px;
    height: 41px;
    padding: 7px 10px 0 9px;
    background-color: rgba(255, 255, 255, 0.5);
    font-family: "Liberation Sans", Arial, sans-serif;
    font-size: 24px;
    color: rgba(0, 0, 0, 0.75);
}

.attr-first {
    letter-spacing: 0.8px;
}

.attribution b {
    margin-left: 4px;
}

/* table */
.bike-table {
    width: 100%;
    border-collapse: collapse;
    table-layout: fixed;
    font-size: 28px;
}

.bike-table th,
.bike-table td {
    height: 106px;
    padding: 0 32px;
    text-align: left;
    font-weight: 500;
}

.bike-table th {
    padding-bottom: 8px;
    border-bottom: 2px solid #e0e0e0;
}

.bike-table td {
    font-weight: 400;
}

.bike-table .col-id {
    font-weight: 400;
}

.col-id { width: 325px; }
.col-lng { width: 938px; }
.col-lat { width: 939px; }
```
